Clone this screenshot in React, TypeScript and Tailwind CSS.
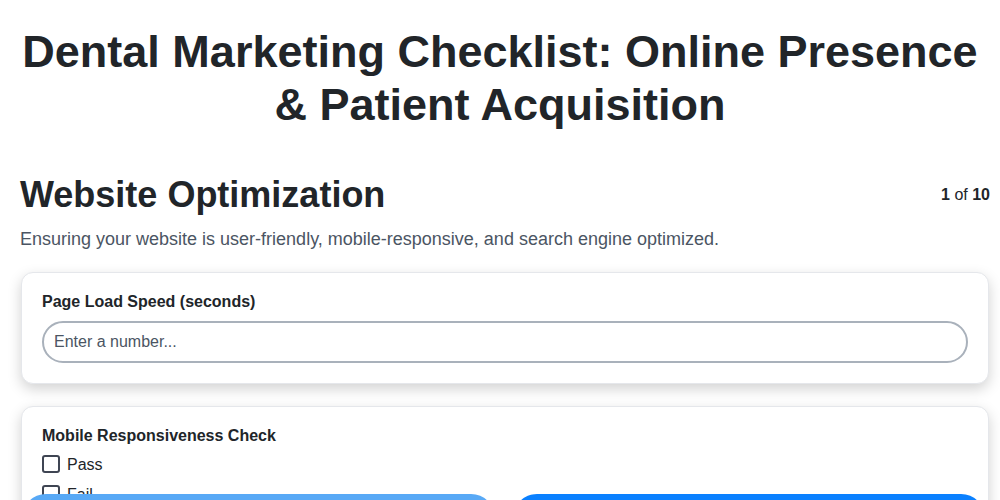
export default function App() {
	return (
		<div className="min-h-screen bg-white text-[#212529] font-['Liberation_Sans',Arial,sans-serif]">
			<div className="px-5 pt-[25px]">
				<h1 className="text-center text-[45px] leading-[53px] font-bold">
					Dental Marketing Checklist: Online Presence &amp; Patient Acquisition
				</h1>
			</div>

			<div className="pl-5 pr-[10px] pt-[42px] pb-[120px]">
				<div className="flex items-start justify-between">
					<h2 className="text-[36px] leading-[44px] font-bold">Website Optimization</h2>
					<div className="pt-[10px] text-base">
						<b>1</b> of <b>10</b>
					</div>
				</div>
				<p className="mt-[9px] text-lg leading-[26px] text-[#4b5563]">
					Ensuring your website is user-friendly, mobile-responsive, and search engine optimized.
				</p>

				<div className="mt-[20px] flex flex-col gap-[22px] px-px">
					<div className="rounded-xl border border-[#e5e7eb] bg-white px-5 pt-[19px] pb-[20px] shadow-[0_5px_14px_rgba(0,0,0,0.18)]">
						<label className="block text-base font-bold leading-5">Page Load Speed (seconds)</label>
						<input
							className="mt-[9px] block h-[42px] w-full rounded-full border-2 border-[#a9b1bb] px-[10px] text-base text-[#212529] placeholder:text-[#4b5563] outline-none"
							type="text"
							placeholder="Enter a number..."
						/>
					</div>

					<div className="rounded-xl border border-[#e5e7eb] bg-white px-5 pt-[19px] pb-[20px] shadow-[0_5px_14px_rgba(0,0,0,0.18)]">
						<div className="text-base font-bold leading-5">Mobile Responsiveness Check</div>
						<div className="mt-[9px] flex flex-col gap-[12px]">
							{['Pass', 'Fail', 'Needs Improvement'].map((opt) => (
								<label key={opt} className="flex items-center gap-[7px] text-base leading-[17px]">
									<span className="block h-[18px] w-[18px] rounded-[3px] border-2 border-[#3f4553]" />
									{opt}
								</label>
							))}
						</div>
					</div>
				</div>
			</div>

			<div className="fixed left-[22px] right-[15px] bottom-[-42px] flex gap-[18px]">
				<button className="h-12 flex-1 rounded-full bg-[#58a9f6] text-white font-bold" type="button">
					Previous
				</button>
				<button className="h-12 flex-1 rounded-full bg-[#0a80ff] text-white font-bold" type="button">
					Next
				</button>
			</div>
		</div>
	);
}
